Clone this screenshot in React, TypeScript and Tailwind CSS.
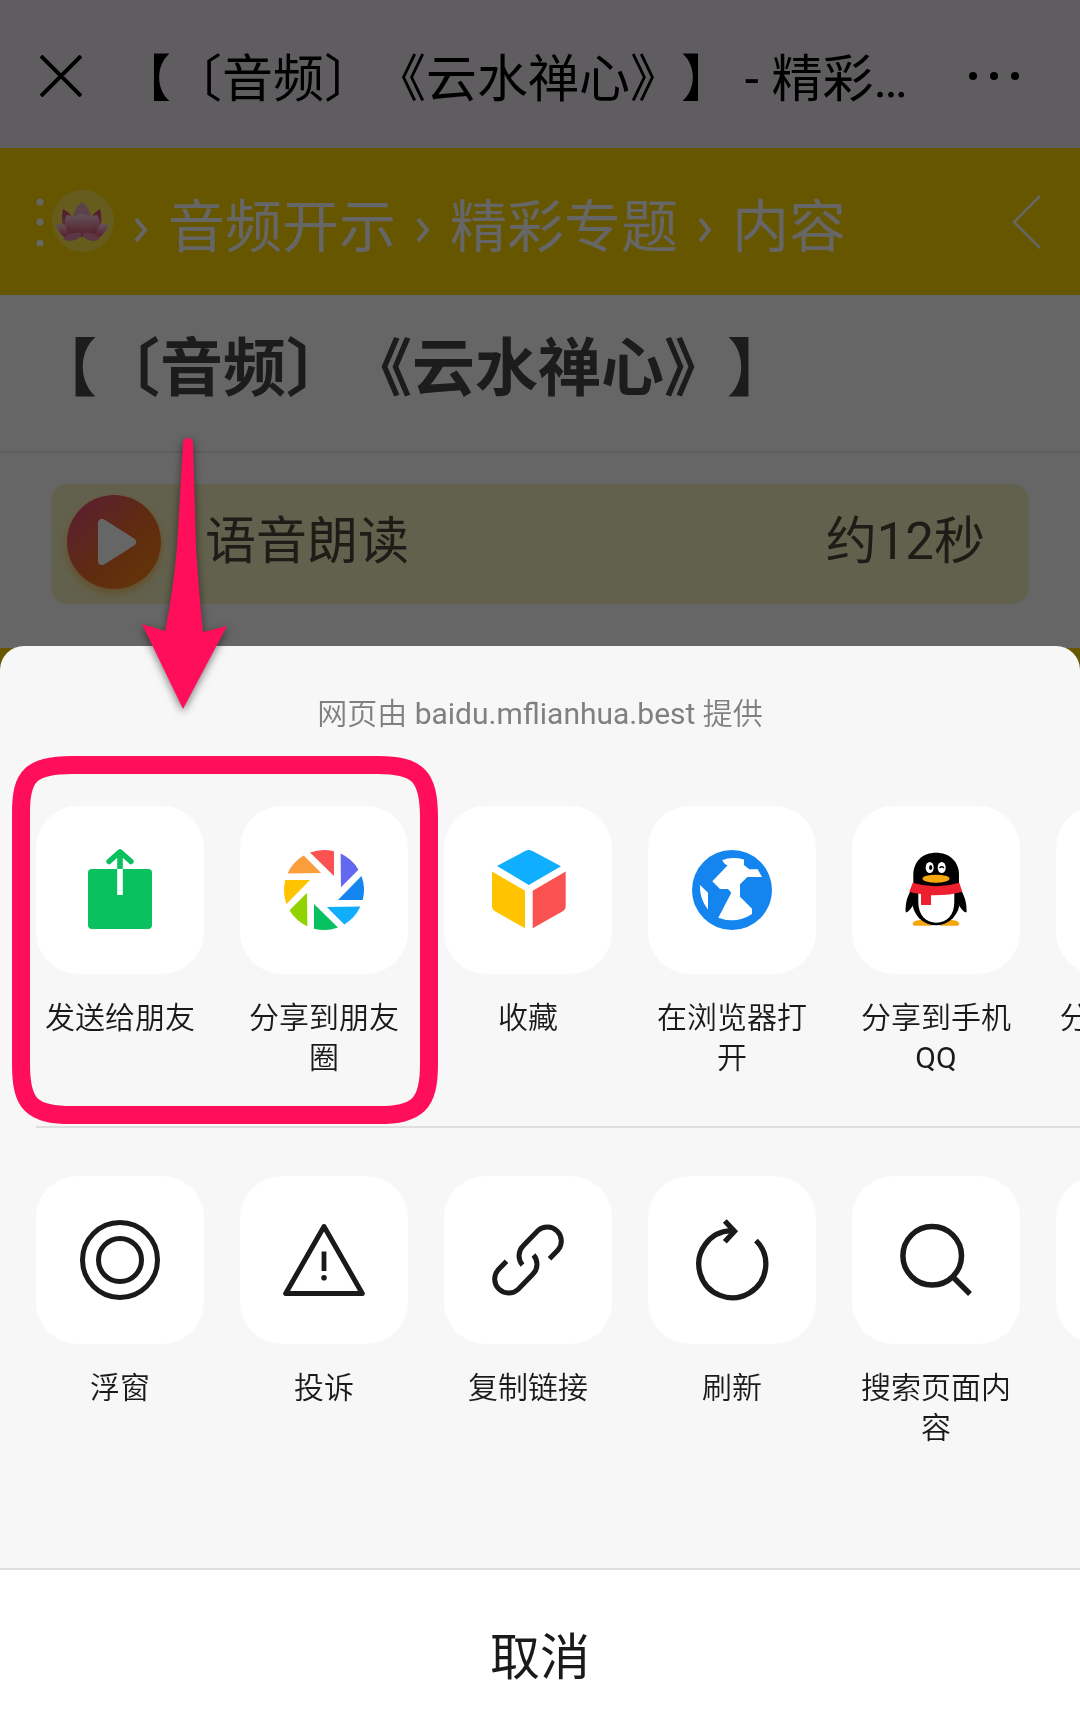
import type { ReactNode } from "react";

function Icon({ children }: { children: ReactNode }) {
  return (
    <svg viewBox="0 0 84 84" className="size-21" fill="none" aria-hidden="true">
      {children}
    </svg>
  );
}

const BLADES = ["#fa5151", "#6467f0", "#1485ee", "#10aeff", "#07c160", "#91d300", "#ffc300", "#fa9d3b"];

const sendIcon = (
  <Icon>
    <rect x="10" y="21" width="64" height="60" rx="4" fill="#0ac160" />
    <path d="M31 13.5 42 3.8 53 13.5" stroke="#0ac160" strokeWidth="5.5" strokeLinecap="round" strokeLinejoin="round" />
    <path d="M42 4V21" stroke="#0ac160" strokeWidth="5.6" />
    <path d="M42 21V47" stroke="#fff" strokeWidth="5.6" />
  </Icon>
);

const momentsIcon = (
  <Icon>
    <g transform="translate(42 42)">
      {BLADES.map((color, i) => (
        <path key={color} d="M-14 -37.5 10 -14V-38.7A40 40 0 0 0 -14 -37.5Z" fill={color} transform={`rotate(${i * 45})`} />
      ))}
    </g>
  </Icon>
);

const cubeIcon = (
  <Icon>
    <path d="M11 18 39.5 2.8Q42.8 1 46 2.8L75 18.3 42.8 37Z" fill="#10aeff" />
    <path d="M6 23.5 39 42.7V80.3L8.5 63Q6 61.5 6 58.5Z" fill="#ffc300" />
    <path d="M79.7 23.5 46.7 42.7V80.3L77.2 63Q79.7 61.5 79.7 58.5Z" fill="#fa5151" />
  </Icon>
);

const globeIcon = (
  <Icon>
    <circle cx="42" cy="42" r="40" fill="#1485ee" />
    <path
      d="M32.3 12Q42 8.5 54 11.5V17L59.3 21.3H67.7L72 29H57.3L50 36.3V48.7L62 60.7V66Q46 76.5 28.3 69.7L41.3 44.7 38 41H30L22.3 33.3 37.7 17.3Q34 16.5 32.3 12Z"
      fill="#fff"
    />
    <path d="M10 37 18 44.7V61.5Q9.5 51 10 37Z" fill="#fff" />
  </Icon>
);

const qqIcon = (
  <Icon>
    <path d="M18.7 76.5C18.5 73 23 72 28 72L38 77.7H20ZM65.3 76.5C65.5 73 61 72 56 72L46 77.7H64Z" fill="#f5a70d" />
    <path d="M17 42C13 49 11 56 11.7 64.3 14 64.5 17 61 19 57L65 57C67 61 70 64.5 72.5 64.3 73 56 71 49 67 42Z" fill="#000" />
    <ellipse cx="42" cy="53" rx="23.8" ry="24.3" fill="#000" />
    <path d="M19.3 38V27C19.3 13 29 4.7 42 4.7S65 13 65 27V38Z" fill="#000" />
    <path d="M24.3 44H60.3V54C60.3 67 53 74.7 42.3 74.7S24.3 67 24.3 54Z" fill="#fff" />
    <path d="M18.7 34.7Q42 42 65.3 34.7L68.3 43.7Q56 47.5 37 47.2V57H27V46Q20 45.5 15.3 43.7Z" fill="#ee2030" />
    <ellipse cx="35.7" cy="19.5" rx="4" ry="5.5" fill="#fff" />
    <ellipse cx="47.7" cy="19.5" rx="4" ry="5.5" fill="#fff" />
    <ellipse cx="36.7" cy="19.5" rx="1.6" ry="2.5" fill="#000" />
    <path d="M45.5 20Q47.7 17.5 50 20" stroke="#000" strokeWidth="1.3" />
    <ellipse cx="42" cy="30.7" rx="13.5" ry="4" fill="#f5a70d" />
  </Icon>
);

const floatIcon = (
  <Icon>
    <circle cx="42" cy="42" r="37.5" stroke="#1a1a1a" strokeWidth="5" />
    <circle cx="42" cy="42" r="21.5" stroke="#1a1a1a" strokeWidth="5" />
  </Icon>
);

const reportIcon = (
  <Icon>
    <path d="M42 8.5 3.7 75.5H80.3Z" stroke="#1a1a1a" strokeWidth="5" strokeLinejoin="round" />
    <path d="M42 33.5V53" stroke="#1a1a1a" strokeWidth="4.8" />
    <circle cx="42" cy="59.7" r="2.8" fill="#1a1a1a" />
  </Icon>
);

const linkIcon = (
  <Icon>
    <g stroke="#1a1a1a" strokeWidth="5">
      <path d="M36.5 47A14 14 0 0 1 37 28L52 12.5A14 14 0 0 1 72 32L63.5 40.8" />
      <path d="M47.5 37A14 14 0 0 1 47 56L32 71.5A14 14 0 0 1 12 52L20.5 43.2" />
    </g>
  </Icon>
);

const refreshIcon = (
  <Icon>
    <g stroke="#1a1a1a" strokeWidth="5.3">
      <path d="M66 22.5A33.5 33.5 0 1 1 41 12.7H43.5" />
      <path d="M34.8 3 44.5 13.3 34.8 23.7" />
    </g>
  </Icon>
);

const searchIcon = (
  <Icon>
    <circle cx="38.2" cy="37.8" r="29.3" stroke="#1a1a1a" strokeWidth="5.5" />
    <path d="M59 59 76 76" stroke="#1a1a1a" strokeWidth="5.5" />
  </Icon>
);

type Action = { label?: string; latin?: string; icon?: ReactNode };

const shareActions: Action[] = [
  { label: "发送给朋友", icon: sendIcon },
  { label: "分享到朋友圈", icon: momentsIcon },
  { label: "收藏", icon: cubeIcon },
  { label: "在浏览器打开", icon: globeIcon },
  { label: "分享到手机", latin: "QQ", icon: qqIcon },
  { label: "分享到QQ空间" },
];

const pageActions: Action[] = [
  { label: "浮窗", icon: floatIcon },
  { label: "投诉", icon: reportIcon },
  { label: "复制链接", icon: linkIcon },
  { label: "刷新", icon: refreshIcon },
  { label: "搜索页面内容", icon: searchIcon },
  {},
];

function ActionRow({ actions }: { actions: Action[] }) {
  return (
    <div className="flex gap-9 overflow-hidden pl-9">
      {actions.map((a, i) => (
        <button
          key={i}
          type="button"
          aria-label={a.label ? a.label + (a.latin ?? "") : "更多"}
          className="flex w-42 shrink-0 flex-col items-center gap-6 text-[#1a1a1a]"
        >
          <span className="flex size-42 items-center justify-center rounded-[42px] bg-white">{a.icon}</span>
          <span className="min-h-20 w-full text-center text-[30px] leading-10 font-[350] break-all">
            {a.label}
            {a.latin && <span className="font-normal">{a.latin}</span>}
          </span>
        </button>
      ))}
    </div>
  );
}

function Separator() {
  return (
    <svg viewBox="0 0 14 26" className="mx-5 mt-4 h-6.5 w-3.5" fill="none" stroke="#fff" strokeWidth="4" aria-hidden="true">
      <path d="M2 2 11 13 2 24" />
    </svg>
  );
}

function Lotus() {
  return (
    <svg viewBox="0 0 64 64" className="size-16" aria-hidden="true">
      <defs>
        <linearGradient id="petal" x1="0" y1="0" x2="0" y2="1">
          <stop offset="0" stopColor="#f6d0dc" />
          <stop offset="1" stopColor="#d4456f" />
        </linearGradient>
        <linearGradient id="petalDark" x1="0" y1="0" x2="0" y2="1">
          <stop offset="0" stopColor="#c8406c" />
          <stop offset="1" stopColor="#e79ab4" />
        </linearGradient>
      </defs>
      <circle cx="33" cy="31" r="31" fill="#fff080" fillOpacity="0.6" />
      <path d="M13 19Q25 25 26 40L15 42Q10 32 13 19ZM50 19Q39 25 38 40L48 42Q54 32 50 19Z" fill="url(#petalDark)" />
      <path d="M32 12Q43 20 41 34H23Q21 20 32 12Z" fill="#e3a9bd" />
      <path d="M6 34Q18 32 29 46 20 50 14 47 8 42 6 34ZM59 34Q46 32 35 46 44 50 50 47 56 42 59 34Z" fill="url(#petal)" />
      <path d="M17 25Q28 26 30 44 22 47 17 41 13 31 17 25ZM47 25Q36 26 34 44 42 47 47 41 51 31 47 25Z" fill="url(#petal)" />
      <path d="M32 24Q49 27 43 38 38 45 32 47 26 45 22 38 16 27 32 24Z" fill="url(#petal)" />
      <path d="M31 43Q20 41 13 49 23 54 31 46ZM33 43Q44 41 50 49 40 54 33 46Z" fill="#e88aa8" />
    </svg>
  );
}

function WebPage() {
  return (
    <div className="flex min-h-screen flex-col bg-[#ffd700]">
      <header className="flex h-37 items-center gap-[38px] bg-[#eee9f1] pt-1 pr-15 pl-10 text-black">
        <button type="button" aria-label="关闭">
          <svg viewBox="0 0 42 42" className="size-[42px]" fill="none" stroke="#000" strokeWidth="4" aria-hidden="true">
            <path d="M1 1 41 41M41 1 1 41" />
          </svg>
        </button>
        <h1 className="min-w-0 flex-1 pt-2 text-[51px] leading-16 whitespace-nowrap [text-spacing-trim:space-all]">
          【〔音频〕《云水禅心》】 - 精彩…
        </h1>
        <button type="button" aria-label="更多">
          <svg viewBox="0 0 52 10" className="h-2.5 w-13" aria-hidden="true">
            <circle cx="5" cy="5" r="4" />
            <circle cx="26" cy="5" r="4" />
            <circle cx="47" cy="5" r="4" />
          </svg>
        </button>
      </header>

      <nav aria-label="路径" className="flex h-[147px] items-center bg-[#ffd700] pr-[38px] pl-9 text-[57px] leading-18 text-white">
        <svg viewBox="0 0 8 50" className="mr-1.5 h-[50px] w-2" fill="#fff" aria-hidden="true">
          <circle cx="4" cy="5" r="3.5" />
          <circle cx="4" cy="25" r="3.5" />
          <circle cx="4" cy="46" r="3.5" />
        </svg>
        <a href="#home" aria-label="首页">
          <Lotus />
        </a>
        <Separator />
        <a href="#audio" className="pt-3">音频开示</a>
        <Separator />
        <a href="#topics" className="pt-3">精彩专题</a>
        <Separator />
        <span className="pt-3">内容</span>
        <button type="button" aria-label="返回" className="ml-auto">
          <svg viewBox="0 0 32 56" className="h-14 w-8" fill="none" stroke="#fff" strokeWidth="2.5" aria-hidden="true">
            <path d="M30 2 4 28 30 54" />
          </svg>
        </button>
      </nav>

      <main className="bg-white pb-11">
        <h2 className="border-b-2 border-[#e8e8ea] px-[34px] pt-[34px] pb-[42px] text-[63px] leading-20 font-bold whitespace-nowrap text-[#464649] [text-spacing-trim:space-all]">
          【〔音频〕《云水禅心》】
        </h2>
        <div className="mx-[51px] mt-[31px] flex h-30 items-center rounded-2xl bg-[#f5f2c0] pr-11 pb-1 pl-4 text-[51px] leading-16 text-[#4d473a]">
          <button
            type="button"
            aria-label="播放"
            className="mr-11 flex size-[94px] items-center justify-center rounded-full bg-linear-to-br from-[#e0457c] via-[#ee6a2c] to-[#f98a00] shadow-[0_4px_8px_#ff900080]"
          >
            <svg viewBox="0 0 40 50" className="ml-1 h-12.5 w-10" fill="#fff" stroke="#fff" strokeWidth="8" strokeLinejoin="round" aria-hidden="true">
              <path d="M6 6V44L36 25Z" />
            </svg>
          </button>
          <span>语音朗读</span>
          <span className="ml-auto">约12秒</span>
        </div>
      </main>
    </div>
  );
}

function ShareSheet() {
  return (
    <section aria-label="分享" className="fixed inset-x-0 bottom-0 overflow-hidden rounded-t-3xl bg-[#f7f7f7]">
      <p className="mt-12 mb-18 text-center text-[30px] leading-10 font-[350] text-[#808080]">
        网页由 <span className="font-normal">baidu.mflianhua.best</span> 提供
      </p>
      <ActionRow actions={shareActions} />
      <div className="my-12 ml-9 h-0.5 bg-[#dedede]" />
      <ActionRow actions={pageActions} />
      <button
        type="button"
        className="mt-30 block w-full border-t-2 border-[#dedede] bg-white pt-14 pb-[38px] text-center text-[50px] leading-16 text-[#1a1a1a]"
      >
        取消
      </button>
    </section>
  );
}

function Annotation() {
  return (
    <svg
      viewBox="0 0 440 704"
      className="pointer-events-none absolute top-106 left-0 h-176 w-110"
      fill="none"
      aria-hidden="true"
    >
      <path
        d="M183 19A5 5 0 0 1 193 19L196 123Q199 170 203 208L227 202 183 285 142 200 165 207Q173 170 177 123Z"
        fill="#ff0f5b"
        className="drop-shadow-[0_3px_4px_#00000080]"
      />
      <path
        d="M21 388C21 352 31 341 72 341H378C418 341 429 352 429 394V640C429 680 418 691 378 691H72C31 691 21 680 21 640Z"
        stroke="#ff0f5b"
        strokeWidth="18"
      />
    </svg>
  );
}

export default function App() {
  return (
    <div className="relative min-h-screen overflow-hidden [font-family:Roboto,'Noto_Sans_CJK_SC',sans-serif]">
      <WebPage />
      <div className="fixed inset-0 bg-black/60" />
      <ShareSheet />
      <Annotation />
    </div>
  );
}
